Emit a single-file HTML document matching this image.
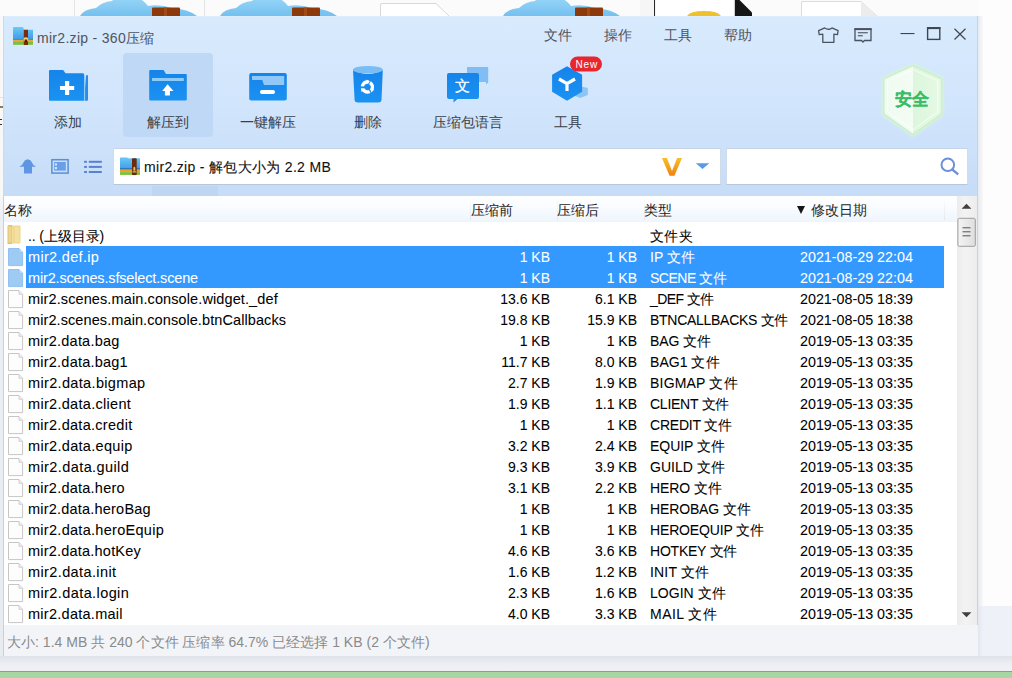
<!DOCTYPE html>
<html><head><meta charset="utf-8">
<style>
*{margin:0;padding:0;box-sizing:border-box}
html,body{width:1012px;height:678px;overflow:hidden;background:#fbfbfb;font-family:"Liberation Sans",sans-serif;position:relative}
.a{position:absolute}
svg.a{overflow:visible}
.t{position:absolute;white-space:nowrap;line-height:16px}
i{font-style:normal}
.ic{display:block}
#list{position:absolute;left:4px;top:196px;width:953px;height:429px;overflow:hidden}
.row{position:absolute;left:0;height:21px;width:953px;font-size:14px;color:#000;-webkit-text-stroke:0.05px #000}
.row.sel{color:#fff;-webkit-text-stroke:0.05px #fff}
.row .bg{position:absolute;left:22px;top:0;width:918px;height:21px;background:#3399ff}
.row span{position:absolute;top:3px;white-space:nowrap;line-height:16px}
.c1{left:24px;font-size:14.7px}
.c2{right:407px}
.c3{right:320px}
.c4{left:646px}
.c5{left:796px;font-size:14.3px}
.hd{position:absolute;font-size:14px;color:#1e1e1e;white-space:nowrap;line-height:16px}
.lab{position:absolute;top:114px;font-size:14px;color:#3a3f48;white-space:nowrap;line-height:16px;text-align:center;width:100px}
.menu{position:absolute;top:26.5px;font-size:14px;color:#4e535c;white-space:nowrap;line-height:16px}
</style></head><body>
<div class="a" style="left:74px;top:0;width:1px;height:16px;background:#e4e4e4"></div>
<div class="a" style="left:204px;top:0;width:1px;height:16px;background:#e4e4e4"></div>
<svg class="a" style="left:0;top:0" width="1012" height="16" viewBox="0 0 1012 16">
<defs><linearGradient id="cl" x1="0" y1="0" x2="0" y2="1"><stop offset="0" stop-color="#9ad8f8"/><stop offset="1" stop-color="#74c0ef"/></linearGradient>
<symbol id="cloud" viewBox="0 0 118 16"><path d="M0 16Q4 9 16 8Q22 2 32 1Q38 -6 52 -4Q62 -2 68 6Q80 4 92 8Q108 9 117 16Z" fill="url(#cl)"/><rect x="72" y="7.5" width="28" height="9" rx="1" fill="#8c3a0c"/><rect x="84" y="7.5" width="3" height="9" fill="#a44a14"/></symbol></defs>
<use href="#cloud" x="80" y="0" width="118" height="16"/>
<use href="#cloud" x="220" y="0" width="118" height="16"/>
<use href="#cloud" x="503" y="0" width="118" height="16"/>
<path d="M380.5 16V5Q380.5 3.5 382 3.5H436L449 16" fill="#fff" stroke="#d8d8d8"/>
<rect x="640" y="0" width="14" height="16" fill="#f6f6f6"/><rect x="654" y="0" width="1.2" height="16" fill="#2a2a2a"/><rect x="655.2" y="0" width="78" height="16" fill="#fff"/>
<path d="M687 16Q690 11 704 11Q718 11 721 16Z" fill="#f0c02c"/>
<path d="M734.8 0H739.5L752 12.5V16H734.8Z" fill="#161616"/>
<path d="M801.5 16V1.5H861L877 16" fill="#fff" stroke="#dcdcdc"/><path d="M861 1.5L877 16H861Z" fill="#ececec"/>
</svg>

<div class="a" style="left:978px;top:0;width:34px;height:606px;background:#fdfdfd"></div>
<div class="a" style="left:0;top:606px;width:1012px;height:66px;background:#eef1f8"></div>
<div class="a" style="left:0;top:671px;width:1012px;height:1px;background:#7aab77"></div>
<div class="a" style="left:0;top:672px;width:1012px;height:6px;background:#a8d6a2"></div>

<!-- window -->
<div class="a" style="left:0;top:16px;width:3px;height:640px;background:linear-gradient(#f8f8f9,#f8f8f9 180px,#eceff3 200px,#e8ecf1)"></div>
<div class="a" style="left:0;top:106px;width:3px;height:2px;background:#8a7a5e"></div>
<div class="a" style="left:0;top:97px;width:3px;height:1px;background:#dde3ea"></div>
<div class="a" style="left:0;top:119px;width:2px;height:1px;background:#333"></div>
<div class="a" style="left:0;top:124px;width:2px;height:1px;background:#333"></div>
<div class="a" style="left:0;top:656px;width:1012px;height:15px;background:linear-gradient(#dfe2e9,#eceef4 50%,#eff1f7)"></div>
<div class="a" style="left:978px;top:16px;width:5px;height:590px;background:linear-gradient(90deg,#e6ebf1,#f8f8f8)"></div>
<div class="a" style="left:978px;top:606px;width:5px;height:50px;background:linear-gradient(90deg,#e3e6ee,#eef1f8)"></div>
<div class="a" style="left:3px;top:16px;width:975px;height:640px;border-left:1px solid #c5d1de;background:#f3f4f8"></div>
<div class="a" style="left:3px;top:16px;width:1px;height:180px;background:#c9dbf0"></div>
<div class="a" style="left:977px;top:16px;width:1px;height:609px;background:#c8d3df"></div>
<div class="a" style="left:4px;top:16px;width:973px;height:180px;background:linear-gradient(#e3effc,#d8eafd 1px,#d1e5fc 50%,#c6dcf7)"></div>
<!-- title -->
<svg class="a" style="left:0;top:0" width="1012" height="200" viewBox="0 0 1012 200">
<defs>
 <linearGradient id="zb" x1="0" y1="0" x2="0" y2="1"><stop offset="0" stop-color="#6ccaf6"/><stop offset="1" stop-color="#3b98e6"/></linearGradient>
 <symbol id="zip" viewBox="0 0 20 18">
  <path d="M0 0.8Q0 0 0.8 0H10L11 2.8H20V13H0Z" fill="url(#zb)"/>
  <rect x="0" y="12.2" width="20" height="1" fill="#3a86d0" opacity="0.8"/>
  <rect x="0" y="13.1" width="20" height="1.9" fill="#f2a025"/>
  <rect x="0" y="15" width="20" height="2.8" fill="#79c03d"/>
  <rect x="10.8" y="2.8" width="4.2" height="15.4" fill="#7a2c0e"/>
  <circle cx="12.9" cy="12.6" r="2.4" fill="#f6d27a"/>
  <path d="M11.6 12.5H14.2V15.2H11.6Z" fill="#5a1e08"/>
 </symbol>
 <symbol id="zip2" viewBox="0 0 20 18">
  <path d="M0 0.8Q0 0 0.8 0H7L8 1.1H20V13H0Z" fill="url(#zb)"/>
  <rect x="0" y="11" width="20" height="1.3" fill="#2b6fb8"/>
  <rect x="0" y="12.3" width="20" height="2.6" fill="#f2a21e"/>
  <rect x="0" y="14.9" width="20" height="2.8" fill="#7cc23a"/>
  <rect x="12" y="1" width="4.7" height="17" rx="1" fill="#6e2a0c"/>
  <path d="M13.4 10.5L14.35 9.4L15.3 10.5V13.5H13.4Z" fill="#e9c060"/>
  <rect x="12.5" y="14.2" width="3.7" height="1" fill="#e8d7b0"/>
 </symbol>
 <linearGradient id="bl" x1="0" y1="0" x2="0" y2="1"><stop offset="0" stop-color="#1684ea"/><stop offset="1" stop-color="#1a92f2"/></linearGradient>
 <linearGradient id="shg" x1="0" y1="0" x2="1" y2="0"><stop offset="0" stop-color="#eefbf0"/><stop offset="0.5" stop-color="#f4fcf3"/><stop offset="0.5" stop-color="#dcf6dc"/><stop offset="1" stop-color="#e6f9e4"/></linearGradient>
</defs>
<use href="#zip" x="13" y="27" width="20" height="18"/>

<!-- shirt -->
<path d="M822.8 42.3V34.2L819.2 34.6L818.6 30.6L824.8 27.9Q828.4 30.6 831.9 27.9L838.1 30.6L837.5 34.6L833.9 34.2V42.3Z" fill="none" stroke="#4b525d" stroke-width="1.3" stroke-linejoin="round"/>
<!-- message -->
<path d="M855 29H871V40.5H864.5L863 42L861.5 40.5H855Z" fill="none" stroke="#4b525d" stroke-width="1.3"/>
<rect x="854.4" y="28.3" width="17.2" height="1.8" fill="#4b525d"/>
<rect x="857.8" y="32.2" width="10" height="1.1" fill="#4b525d"/>
<rect x="857.8" y="35.2" width="5" height="1.1" fill="#4b525d"/>
<!-- min max close -->
<rect x="900.5" y="33" width="14" height="1.1" fill="#3f4651"/>
<rect x="927.6" y="27.8" width="12.2" height="11.6" fill="none" stroke="#3f4651" stroke-width="1.4"/>
<rect x="927" y="27.1" width="13.4" height="2" fill="#3f4651"/>
<path d="M954.5 28.8L965.5 39.5M965.5 28.8L954.5 39.5" stroke="#3f4651" stroke-width="1.2"/>

<!-- toolbar selected bg -->
<rect x="123" y="53" width="90" height="84" rx="4" fill="#bfd8f5"/>

<!-- icon 1 add -->
<path d="M86 75.3H88V99.8Q88 100.8 87 100.8H84Z" fill="#2a8bea"/>
<path d="M49 71Q49 70 50 70H63.2L65.5 73.2H83Q84 73.2 84 74.2V100.8H50Q49 100.8 49 99.8Z" fill="url(#bl)"/>
<rect x="84" y="75" width="1.1" height="25.8" fill="#8fd0fb"/>
<path d="M65 81H69.2V85.9H74.2V90.1H69.2V95H65V90.1H60V85.9H65Z" fill="#fff"/>

<!-- icon 2 extract to -->
<path d="M149.2 71Q149.2 70 150.2 70H163.6L166 74H185.8Q186.8 74 186.8 75V99.5Q186.8 100.5 185.8 100.5H150.2Q149.2 100.5 149.2 99.5Z" fill="url(#bl)"/>
<rect x="152" y="78" width="31.8" height="3" fill="#8fcbf7"/>
<path d="M167.6 84.2L173.5 90.9H169.9V95.5H164.9V90.9H162.2Z" fill="#fff"/>

<!-- icon 3 one-key -->
<rect x="249.2" y="73" width="37.6" height="27.5" rx="2" fill="url(#bl)"/>
<path d="M252 76H284.2V85H264L262.2 80H252Z" fill="#90c9f7"/>
<rect x="260" y="89.9" width="15" height="4" rx="2" fill="#fff"/>

<!-- icon 4 trash -->
<path d="M353 70Q368 78 382.8 70L381.5 100Q381.2 102.5 378 102.5H358Q354.8 102.5 354.6 100Z" fill="url(#bl)"/>
<ellipse cx="367.9" cy="69.8" rx="14.9" ry="3.8" fill="#7abdf5"/>
<g transform="translate(367.4 87)"><circle r="5" fill="none" stroke="#fff" stroke-width="3.4" stroke-dasharray="8.4 2.07" transform="rotate(-60)"/><path d="M-1 -7.6L2.6 -5.3L-0.6 -3.2Z" fill="#fff"/><path d="M6.9 2.4L3.9 5.6L2.8 2Z" fill="#fff"/><path d="M-5.8 5.2L-6.4 1L-3 2.4Z" fill="#fff"/></g>

<!-- icon 5 language -->
<path d="M467 67H487.5Q488.2 67 488.2 68V82.5L486 84.5V82H467Z" fill="#80bdf4"/>
<path d="M449 73H477Q479 73 479 75V97Q479 99 477 99H457.5L453.5 102.5V99H449Q447 99 447 97V75Q447 73 449 73Z" fill="url(#bl)"/>
<text x="462" y="90.8" font-size="15" fill="#fff" stroke="#fff" stroke-width="0.3" text-anchor="middle" font-family="Liberation Sans">文</text>

<!-- icon 6 tools -->
<path d="M573 84.5L587.8 88V95L580 98L573 95Z" fill="#8cc4f4"/>
<path d="M567 66.2L582.1 74.7V91.8L567 100.7L552.1 91.8V74.7Z" fill="url(#bl)"/>
<path d="M559 79L567 83.6L575 79M567 83.6V91" fill="none" stroke="#fff" stroke-width="3.2" stroke-linejoin="round"/>
<rect x="570" y="56.5" width="32" height="15" rx="7.5" fill="#e8262d"/>
<text x="586.8" y="67.6" font-size="10" fill="#fff" text-anchor="middle" font-family="Liberation Sans" letter-spacing="0.9">New</text>

<!-- shield -->
<defs><filter id="gl" x="-30%" y="-30%" width="160%" height="160%"><feGaussianBlur stdDeviation="1.6"/></filter>
<linearGradient id="shb" x1="0" y1="0" x2="0" y2="1"><stop offset="0" stop-color="#d6f5d4"/><stop offset="1" stop-color="#e4f9e0"/></linearGradient></defs>
<path d="M913 63.5L943.4 77.6V115L913 136.8L882 115V77.6Z" fill="#d9f6d6" filter="url(#gl)" opacity="0.9"/>
<path d="M913 65.5L941.6 78.8V114L913 134.6L883.8 114V78.8Z" fill="url(#shg)" stroke="#cdf0ca" stroke-width="1.6"/>
<path d="M913 69.5L937.8 81V111.8L913 129.8L887.6 111.8V81Z" fill="none" stroke="#ffffff" stroke-opacity="0.7" stroke-width="1"/>
<text x="912" y="104.8" font-size="17" font-weight="bold" fill="#38bd69" stroke="#38bd69" stroke-width="0.2" text-anchor="middle" font-family="Liberation Sans">安全</text>

<!-- nav icons -->
<path d="M27.7 159.2Q31 159.6 31.8 162.3Q32.8 165.6 36.2 166.7H32V173.6H24V166.7H19.2Q22.6 165.6 23.6 162.3Q24.4 159.6 27.7 159.2Z" fill="#5e96e3"/>
<rect x="51.9" y="159.7" width="16.2" height="13.4" fill="none" stroke="#5a8fd8" stroke-width="1.5"/>
<rect x="54.2" y="162" width="11.6" height="8.6" fill="#6a9ee6"/>
<rect x="55" y="163.3" width="2" height="2.2" fill="#d5e5fb"/>
<rect x="55" y="167" width="2" height="2.2" fill="#d5e5fb"/>
<g fill="#5a80d0">
<rect x="84.1" y="160.8" width="2.8" height="2"/><rect x="88.8" y="160.8" width="13" height="2"/>
<rect x="84.1" y="165.9" width="2.8" height="2"/><rect x="88.8" y="165.9" width="13" height="2"/>
<rect x="84.1" y="171" width="2.8" height="2"/><rect x="88.8" y="171" width="13" height="2"/>
</g>
</svg>

<div class="t" style="left:37px;top:30px;font-size:14px;color:#4e5460;letter-spacing:0.3px">mir2.zip - 360压缩</div>
<div class="menu" style="left:544px">文件</div>
<div class="menu" style="left:604px">操作</div>
<div class="menu" style="left:664px">工具</div>
<div class="menu" style="left:724px">帮助</div>

<div class="lab" style="left:18px">添加</div>
<div class="lab" style="left:118px">解压到</div>
<div class="lab" style="left:218px">一键解压</div>
<div class="lab" style="left:318px">删除</div>
<div class="lab" style="left:418px">压缩包语言</div>
<div class="lab" style="left:518px">工具</div>

<!-- address -->
<div class="a" style="left:726px;top:148px;width:242px;height:37px;border:1px solid #d0dcea;border-top-color:#c6d4e5;border-bottom-color:#b7c7db;background:#fff"></div>
<div class="a" style="left:113px;top:148px;width:608px;height:37px;border:1px solid #d0dcea;border-top-color:#c6d4e5;border-bottom-color:#b7c7db;background:#fff"></div>
<svg class="a" style="left:0;top:0" width="1012" height="200" viewBox="0 0 1012 200">
<use href="#zip2" x="120" y="157.2" width="20" height="18"/>
<defs><linearGradient id="vg" x1="0" y1="0" x2="0" y2="1"><stop offset="0" stop-color="#f7c02a"/><stop offset="1" stop-color="#f0820e"/></linearGradient></defs>
<path d="M661.9 158H666.9L672 171L677.1 158H682L674.4 175.8H669.6Z" fill="url(#vg)"/>
<path d="M695.8 163.2H709.3L702.5 169.1Z" fill="#5b9be6"/>
<circle cx="947.8" cy="164.8" r="6.3" fill="none" stroke="#6b8fd9" stroke-width="2"/>
<path d="M952.4 169.6L958.2 174.4" stroke="#6b8fd9" stroke-width="2.4"/>
</svg>
<div class="t" style="left:144px;top:159px;font-size:14px;color:#111;letter-spacing:0.32px;-webkit-text-stroke:0.1px #111">mir2.zip - 解包大小为 2.2 MB</div>
<div class="a" style="left:152px;top:186px;width:66px;height:10px;background:#bed6f2"></div>


<!-- list header -->
<div class="a" style="left:4px;top:196px;width:953px;height:26px;background:linear-gradient(#fdfeff,#fafcff 40%,#eef5fc)"></div>
<div class="a" style="left:470px;top:196px;width:1px;height:24px;background:linear-gradient(#fff,#e2e7ee)"></div>
<div class="a" style="left:557px;top:196px;width:1px;height:24px;background:linear-gradient(#fff,#e2e7ee)"></div>
<div class="a" style="left:644px;top:196px;width:1px;height:24px;background:linear-gradient(#fff,#e2e7ee)"></div>
<div class="a" style="left:944px;top:196px;width:1px;height:24px;background:linear-gradient(#fff,#e2e7ee)"></div>
<div class="hd" style="left:4px;top:202px">名称</div>
<div class="hd" style="left:471px;top:202px">压缩前</div>
<div class="hd" style="left:557px;top:202px">压缩后</div>
<div class="hd" style="left:644px;top:202px">类型</div>
<div class="a" style="left:796.5px;top:205.6px;width:0;height:0;border-left:4.6px solid transparent;border-right:4.6px solid transparent;border-top:8.4px solid #161616"></div>
<div class="hd" style="left:811px;top:202px">修改日期</div>
<div class="a" style="left:4px;top:222px;width:953px;height:403px;background:#fff"></div>

<div id="list">
<div class="row" style="top:29px"><i style="position:absolute;left:3px;top:0px"><svg class="ic" width="16" height="20" viewBox="0 0 16 20"><path d="M0.5 1.5Q0.5 0 2 0H5.5V18.5Q5 19 3.5 19H0.5Z" fill="#e3c46c"/><path d="M5.5 0.5H12.5Q13.5 0.5 13.5 1.5V17.5Q13 18.5 11 18.5H5.5Z" fill="#f1da8e"/><path d="M1.5 1.5H4.5V17.5H1.5Z" fill="#f3e2a8" opacity="0.6"/><path d="M8 2H12V17H8Z" fill="#f7e8b6" opacity="0.5"/></svg></i><span class="c1" style="font-size:14px;letter-spacing:-0.111px">.. (上级目录)</span><span class="c4" style="font-size:14px;letter-spacing:0.333px">文件夹</span></div>
<div class="row sel" style="top:50px"><div class="bg"></div><i style="position:absolute;left:4px;top:2px"><svg class="ic" width="16" height="19" viewBox="0 0 16 19"><path d="M0.5 0.5H11L14.6 4.3V17.6H0.5Z" fill="#9ecbf3" stroke="#93c0ee" stroke-width="1"/><path d="M11 0.5V4.3H14.6" fill="#c4e0fa" stroke="#93c0ee" stroke-width="0.8"/></svg></i><span class="c1" style="font-size:14.5px;letter-spacing:0.318px">mir2.def.ip</span><span class="c2">1 KB</span><span class="c3">1 KB</span><span class="c4" style="font-size:14px;letter-spacing:0.045px">IP 文件</span><span class="c5">2021-08-29 22:04</span></div>
<div class="row sel" style="top:71px"><div class="bg"></div><i style="position:absolute;left:4px;top:2px"><svg class="ic" width="16" height="19" viewBox="0 0 16 19"><path d="M0.5 0.5H11L14.6 4.3V17.6H0.5Z" fill="#9ecbf3" stroke="#93c0ee" stroke-width="1"/><path d="M11 0.5V4.3H14.6" fill="#c4e0fa" stroke="#93c0ee" stroke-width="0.8"/></svg></i><span class="c1" style="font-size:14.5px;letter-spacing:-0.157px">mir2.scenes.sfselect.scene</span><span class="c2">1 KB</span><span class="c3">1 KB</span><span class="c4" style="font-size:14px;letter-spacing:-0.503px">SCENE 文件</span><span class="c5">2021-08-29 22:04</span></div>
<div class="row" style="top:92px"><i style="position:absolute;left:4px;top:2px"><svg class="ic" width="16" height="19" viewBox="0 0 16 19"><path d="M0.5 0.5H11L14.6 4.3V17.6H0.5Z" fill="#fdfdfd" stroke="#c6c6c6" stroke-width="1"/><path d="M11 0.5V4.3H14.6" fill="#eeeeee" stroke="#c6c6c6" stroke-width="0.8"/></svg></i><span class="c1" style="font-size:14.5px;letter-spacing:0.11px">mir2.scenes.main.console.widget._def</span><span class="c2">13.6 KB</span><span class="c3">6.1 KB</span><span class="c4" style="font-size:14px;letter-spacing:-0.57px">_DEF 文件</span><span class="c5">2021-08-05 18:39</span></div>
<div class="row" style="top:113px"><i style="position:absolute;left:4px;top:2px"><svg class="ic" width="16" height="19" viewBox="0 0 16 19"><path d="M0.5 0.5H11L14.6 4.3V17.6H0.5Z" fill="#fdfdfd" stroke="#c6c6c6" stroke-width="1"/><path d="M11 0.5V4.3H14.6" fill="#eeeeee" stroke="#c6c6c6" stroke-width="0.8"/></svg></i><span class="c1" style="font-size:14.5px;letter-spacing:0.093px">mir2.scenes.main.console.btnCallbacks</span><span class="c2">19.8 KB</span><span class="c3">15.9 KB</span><span class="c4" style="font-size:14px;letter-spacing:-0.285px">BTNCALLBACKS 文件</span><span class="c5">2021-08-05 18:38</span></div>
<div class="row" style="top:134px"><i style="position:absolute;left:4px;top:2px"><svg class="ic" width="16" height="19" viewBox="0 0 16 19"><path d="M0.5 0.5H11L14.6 4.3V17.6H0.5Z" fill="#fdfdfd" stroke="#c6c6c6" stroke-width="1"/><path d="M11 0.5V4.3H14.6" fill="#eeeeee" stroke="#c6c6c6" stroke-width="0.8"/></svg></i><span class="c1" style="font-size:14.5px;letter-spacing:0.218px">mir2.data.bag</span><span class="c2">1 KB</span><span class="c3">1 KB</span><span class="c4" style="font-size:14px;letter-spacing:-0.028px">BAG 文件</span><span class="c5">2019-05-13 03:35</span></div>
<div class="row" style="top:155px"><i style="position:absolute;left:4px;top:2px"><svg class="ic" width="16" height="19" viewBox="0 0 16 19"><path d="M0.5 0.5H11L14.6 4.3V17.6H0.5Z" fill="#fdfdfd" stroke="#c6c6c6" stroke-width="1"/><path d="M11 0.5V4.3H14.6" fill="#eeeeee" stroke="#c6c6c6" stroke-width="0.8"/></svg></i><span class="c1" style="font-size:14.5px;letter-spacing:0.226px">mir2.data.bag1</span><span class="c2">11.7 KB</span><span class="c3">8.0 KB</span><span class="c4" style="font-size:14px;letter-spacing:0.05px">BAG1 文件</span><span class="c5">2019-05-13 03:35</span></div>
<div class="row" style="top:176px"><i style="position:absolute;left:4px;top:2px"><svg class="ic" width="16" height="19" viewBox="0 0 16 19"><path d="M0.5 0.5H11L14.6 4.3V17.6H0.5Z" fill="#fdfdfd" stroke="#c6c6c6" stroke-width="1"/><path d="M11 0.5V4.3H14.6" fill="#eeeeee" stroke="#c6c6c6" stroke-width="0.8"/></svg></i><span class="c1" style="font-size:14.5px;letter-spacing:0.342px">mir2.data.bigmap</span><span class="c2">2.7 KB</span><span class="c3">1.9 KB</span><span class="c4" style="font-size:14px;letter-spacing:0.201px">BIGMAP 文件</span><span class="c5">2019-05-13 03:35</span></div>
<div class="row" style="top:197px"><i style="position:absolute;left:4px;top:2px"><svg class="ic" width="16" height="19" viewBox="0 0 16 19"><path d="M0.5 0.5H11L14.6 4.3V17.6H0.5Z" fill="#fdfdfd" stroke="#c6c6c6" stroke-width="1"/><path d="M11 0.5V4.3H14.6" fill="#eeeeee" stroke="#c6c6c6" stroke-width="0.8"/></svg></i><span class="c1" style="font-size:14.5px;letter-spacing:0.304px">mir2.data.client</span><span class="c2">1.9 KB</span><span class="c3">1.1 KB</span><span class="c4" style="font-size:14px;letter-spacing:-0.26px">CLIENT 文件</span><span class="c5">2019-05-13 03:35</span></div>
<div class="row" style="top:218px"><i style="position:absolute;left:4px;top:2px"><svg class="ic" width="16" height="19" viewBox="0 0 16 19"><path d="M0.5 0.5H11L14.6 4.3V17.6H0.5Z" fill="#fdfdfd" stroke="#c6c6c6" stroke-width="1"/><path d="M11 0.5V4.3H14.6" fill="#eeeeee" stroke="#c6c6c6" stroke-width="0.8"/></svg></i><span class="c1" style="font-size:14.5px;letter-spacing:0.285px">mir2.data.credit</span><span class="c2">1 KB</span><span class="c3">1 KB</span><span class="c4" style="font-size:14px;letter-spacing:-0.206px">CREDIT 文件</span><span class="c5">2019-05-13 03:35</span></div>
<div class="row" style="top:239px"><i style="position:absolute;left:4px;top:2px"><svg class="ic" width="16" height="19" viewBox="0 0 16 19"><path d="M0.5 0.5H11L14.6 4.3V17.6H0.5Z" fill="#fdfdfd" stroke="#c6c6c6" stroke-width="1"/><path d="M11 0.5V4.3H14.6" fill="#eeeeee" stroke="#c6c6c6" stroke-width="0.8"/></svg></i><span class="c1" style="font-size:14.5px;letter-spacing:0.31px">mir2.data.equip</span><span class="c2">3.2 KB</span><span class="c3">2.4 KB</span><span class="c4" style="font-size:14px;letter-spacing:-0.05px">EQUIP 文件</span><span class="c5">2019-05-13 03:35</span></div>
<div class="row" style="top:260px"><i style="position:absolute;left:4px;top:2px"><svg class="ic" width="16" height="19" viewBox="0 0 16 19"><path d="M0.5 0.5H11L14.6 4.3V17.6H0.5Z" fill="#fdfdfd" stroke="#c6c6c6" stroke-width="1"/><path d="M11 0.5V4.3H14.6" fill="#eeeeee" stroke="#c6c6c6" stroke-width="0.8"/></svg></i><span class="c1" style="font-size:14.5px;letter-spacing:0.406px">mir2.data.guild</span><span class="c2">9.3 KB</span><span class="c3">3.9 KB</span><span class="c4" style="font-size:14px;letter-spacing:0.014px">GUILD 文件</span><span class="c5">2019-05-13 03:35</span></div>
<div class="row" style="top:281px"><i style="position:absolute;left:4px;top:2px"><svg class="ic" width="16" height="19" viewBox="0 0 16 19"><path d="M0.5 0.5H11L14.6 4.3V17.6H0.5Z" fill="#fdfdfd" stroke="#c6c6c6" stroke-width="1"/><path d="M11 0.5V4.3H14.6" fill="#eeeeee" stroke="#c6c6c6" stroke-width="0.8"/></svg></i><span class="c1" style="font-size:14.5px;letter-spacing:0.236px">mir2.data.hero</span><span class="c2">3.1 KB</span><span class="c3">2.2 KB</span><span class="c4" style="font-size:14px;letter-spacing:-0.092px">HERO 文件</span><span class="c5">2019-05-13 03:35</span></div>
<div class="row" style="top:302px"><i style="position:absolute;left:4px;top:2px"><svg class="ic" width="16" height="19" viewBox="0 0 16 19"><path d="M0.5 0.5H11L14.6 4.3V17.6H0.5Z" fill="#fdfdfd" stroke="#c6c6c6" stroke-width="1"/><path d="M11 0.5V4.3H14.6" fill="#eeeeee" stroke="#c6c6c6" stroke-width="0.8"/></svg></i><span class="c1" style="font-size:14.5px;letter-spacing:0.206px">mir2.data.heroBag</span><span class="c2">1 KB</span><span class="c3">1 KB</span><span class="c4" style="font-size:14px;letter-spacing:-0.141px">HEROBAG 文件</span><span class="c5">2019-05-13 03:35</span></div>
<div class="row" style="top:323px"><i style="position:absolute;left:4px;top:2px"><svg class="ic" width="16" height="19" viewBox="0 0 16 19"><path d="M0.5 0.5H11L14.6 4.3V17.6H0.5Z" fill="#fdfdfd" stroke="#c6c6c6" stroke-width="1"/><path d="M11 0.5V4.3H14.6" fill="#eeeeee" stroke="#c6c6c6" stroke-width="0.8"/></svg></i><span class="c1" style="font-size:14.5px;letter-spacing:0.285px">mir2.data.heroEquip</span><span class="c2">1 KB</span><span class="c3">1 KB</span><span class="c4" style="font-size:14px;letter-spacing:-0.155px">HEROEQUIP 文件</span><span class="c5">2019-05-13 03:35</span></div>
<div class="row" style="top:344px"><i style="position:absolute;left:4px;top:2px"><svg class="ic" width="16" height="19" viewBox="0 0 16 19"><path d="M0.5 0.5H11L14.6 4.3V17.6H0.5Z" fill="#fdfdfd" stroke="#c6c6c6" stroke-width="1"/><path d="M11 0.5V4.3H14.6" fill="#eeeeee" stroke="#c6c6c6" stroke-width="0.8"/></svg></i><span class="c1" style="font-size:14.5px;letter-spacing:0.211px">mir2.data.hotKey</span><span class="c2">4.6 KB</span><span class="c3">3.6 KB</span><span class="c4" style="font-size:14px;letter-spacing:-0.223px">HOTKEY 文件</span><span class="c5">2019-05-13 03:35</span></div>
<div class="row" style="top:365px"><i style="position:absolute;left:4px;top:2px"><svg class="ic" width="16" height="19" viewBox="0 0 16 19"><path d="M0.5 0.5H11L14.6 4.3V17.6H0.5Z" fill="#fdfdfd" stroke="#c6c6c6" stroke-width="1"/><path d="M11 0.5V4.3H14.6" fill="#eeeeee" stroke="#c6c6c6" stroke-width="0.8"/></svg></i><span class="c1" style="font-size:14.5px;letter-spacing:0.385px">mir2.data.init</span><span class="c2">1.6 KB</span><span class="c3">1.2 KB</span><span class="c4" style="font-size:14px;letter-spacing:0.175px">INIT 文件</span><span class="c5">2019-05-13 03:35</span></div>
<div class="row" style="top:386px"><i style="position:absolute;left:4px;top:2px"><svg class="ic" width="16" height="19" viewBox="0 0 16 19"><path d="M0.5 0.5H11L14.6 4.3V17.6H0.5Z" fill="#fdfdfd" stroke="#c6c6c6" stroke-width="1"/><path d="M11 0.5V4.3H14.6" fill="#eeeeee" stroke="#c6c6c6" stroke-width="0.8"/></svg></i><span class="c1" style="font-size:14.5px;letter-spacing:0.406px">mir2.data.login</span><span class="c2">2.3 KB</span><span class="c3">1.6 KB</span><span class="c4" style="font-size:14px;letter-spacing:0.029px">LOGIN 文件</span><span class="c5">2019-05-13 03:35</span></div>
<div class="row" style="top:407px"><i style="position:absolute;left:4px;top:2px"><svg class="ic" width="16" height="19" viewBox="0 0 16 19"><path d="M0.5 0.5H11L14.6 4.3V17.6H0.5Z" fill="#fdfdfd" stroke="#c6c6c6" stroke-width="1"/><path d="M11 0.5V4.3H14.6" fill="#eeeeee" stroke="#c6c6c6" stroke-width="0.8"/></svg></i><span class="c1" style="font-size:14.5px;letter-spacing:0.267px">mir2.data.mail</span><span class="c2">4.0 KB</span><span class="c3">3.3 KB</span><span class="c4" style="font-size:14px;letter-spacing:0.479px">MAIL 文件</span><span class="c5">2019-05-13 03:35</span></div>
</div>
<div class="a" style="left:957px;top:196px;width:20px;height:429px;background:linear-gradient(90deg,#ececec,#f3f3f3 40%,#ededed)"></div>
<svg class="a" style="left:0;top:0" width="1012" height="678" viewBox="0 0 1012 678">
<defs><linearGradient id="th" x1="0" y1="0" x2="1" y2="0"><stop offset="0" stop-color="#f4f4f4"/><stop offset="1" stop-color="#dedede"/></linearGradient></defs>
<path d="M966.5 203.8L971.4 208.8H961.6Z" fill="#404040"/>
<rect x="957.9" y="218.3" width="17.4" height="28" rx="1.5" fill="url(#th)" stroke="#9d9d9d" stroke-width="1"/>
<g stroke="#555" stroke-width="1"><path d="M962.5 227.8H970.5M962.5 231.8H970.5M962.5 235.8H970.5"/></g>
<path d="M961.6 612.3H971.4L966.5 617.3Z" fill="#404040"/>
</svg>


<!-- status -->
<div class="t" style="left:7px;top:634px;font-size:14px;color:#8a8a8a;letter-spacing:0.02px">大小: 1.4 MB 共 240 个文件 压缩率 64.7% 已经选择 1 KB (2 个文件)</div>
</body></html>
